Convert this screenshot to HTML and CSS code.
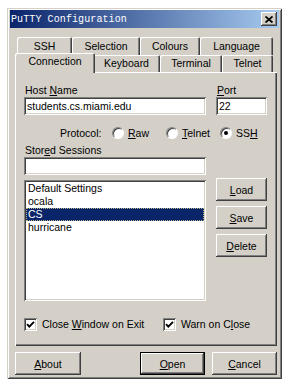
FILE: index.html
```html
<!DOCTYPE html>
<html>
<head>
    <title>PuTTY Configuration</title>
    <link rel="stylesheet" href="styles.css">
</head>
<body>
    <div class="window">
        <div class="titlebar">
            <span class="title">PuTTY Configuration</span>
            <span class="close-btn">
                <svg width="8" height="7" viewBox="0 0 8 7"><path d="M0.5 0.5 L7.5 6.5 M7.5 0.5 L0.5 6.5" stroke="#000" stroke-width="1.8" fill="none"/></svg>
            </span>
        </div>
        <div class="client">
            <div class="tabs">
                <div class="tab-row back">
                    <div class="tab tab-ssh">SSH</div>
                    <div class="tab tab-selection">Selection</div>
                    <div class="tab tab-colours">Colours</div>
                    <div class="tab tab-language">Language</div>
                </div>
                <div class="tab-row front">
                    <div class="tab tab-connection active">Connection</div>
                    <div class="tab tab-keyboard">Keyboard</div>
                    <div class="tab tab-terminal">Terminal</div>
                    <div class="tab tab-telnet">Telnet</div>
                </div>
            </div>

            <div class="panel">
                <div class="host-row">
                    <div class="host-col">
                        <div class="label">Host <u>N</u>ame</div>
                        <div class="field">students.cs.miami.edu</div>
                    </div>
                    <div class="port-col">
                        <div class="label"><u>P</u>ort</div>
                        <div class="field">22</div>
                    </div>
                </div>

                <div class="protocol-row">
                    <span class="protocol-label">Protocol:</span>
                    <span class="radio-opt"><span class="radio"></span><span><u>R</u>aw</span></span>
                    <span class="radio-opt"><span class="radio"></span><span><u>T</u>elnet</span></span>
                    <span class="radio-opt"><span class="radio checked"></span><span>SS<u>H</u></span></span>
                </div>

                <div class="label stored-label">Stor<u>e</u>d Sessions</div>
                <div class="field stored"></div>

                <div class="sessions-row">
                    <ul class="listbox">
                        <li>Default Settings</li>
                        <li>ocala</li>
                        <li class="selected">CS</li>
                        <li>hurricane</li>
                    </ul>
                    <div class="side-buttons">
                        <button class="btn"><u>L</u>oad</button>
                        <button class="btn"><u>S</u>ave</button>
                        <button class="btn"><u>D</u>elete</button>
                    </div>
                </div>

                <div class="check-row">
                    <span class="check-opt first">
                        <span class="checkbox"><svg width="9" height="9" viewBox="0 0 9 9"><path d="M1 4.2 L3.3 6.6 L8 1.8" stroke="#000" stroke-width="1.9" fill="none"/></svg></span>
                        <span>Close <u>W</u>indow on Exit</span>
                    </span>
                    <span class="check-opt">
                        <span class="checkbox"><svg width="9" height="9" viewBox="0 0 9 9"><path d="M1 4.2 L3.3 6.6 L8 1.8" stroke="#000" stroke-width="1.9" fill="none"/></svg></span>
                        <span>Warn on C<u>l</u>ose</span>
                    </span>
                </div>
            </div>

            <div class="bottom-buttons">
                <button class="btn btn-about"><u>A</u>bout</button>
                <div class="right-buttons">
                    <button class="btn btn-default"><u>O</u>pen</button>
                    <button class="btn btn-cancel"><u>C</u>ancel</button>
                </div>
            </div>
        </div>
    </div>
</body>
</html>
```

FILE: styles.css
```css
body {
    margin: 0;
    background: #fff;
    font-family: "Liberation Sans", Arial, sans-serif;
    font-size: 10.5px;
    color: #000;
}
u {
    text-decoration-thickness: 1px;
    text-underline-offset: 1px;
}
.window {
    box-sizing: border-box;
    width: 275px;
    margin: 8px 0 0 7px;
    padding: 2px 3px 4px 3px;
    background: #d4d0c8;
    box-shadow: inset 1px 1px #d4d0c8, inset -1px -1px #404040,
                inset 2px 2px #fff, inset -2px -2px #808080;
}
.titlebar {
    height: 18px;
    display: flex;
    align-items: center;
    justify-content: space-between;
    background: linear-gradient(to right, #0a246a, #a6caf0);
    padding-left: 1px;
}
.title {
    font-family: "Liberation Mono", "DejaVu Sans Mono", monospace;
    font-size: 10px;
    color: #fff;
    letter-spacing: 0.1px;
}
.close-btn {
    width: 16px;
    height: 14px;
    margin-right: 2px;
    display: flex;
    align-items: center;
    justify-content: center;
    background: #d4d0c8;
    box-shadow: inset -1px -1px #404040, inset 1px 1px #fff,
                inset -2px -2px #808080, inset 2px 2px #d4d0c8;
}
.client {
    padding: 0 2px 0 5px;
}

/* tabs */
.tabs {
    margin-top: 9px;
    padding-left: 2px;
}
.tab-row {
    display: flex;
    align-items: flex-start;
}
.tab-row.back {
    height: 18px;
}
.tab-row.front {
    height: 17px;
}
.tab {
    box-sizing: border-box;
    text-align: center;
    line-height: 14px;
    border-radius: 2px 2px 0 0;
    background: #d4d0c8;
    box-shadow: inset 1px 1px #fff, inset -1px 0 #404040, inset -2px 0 #808080;
}
.back .tab {
    height: 18px;
    padding-top: 2px;
}
.front .tab {
    height: 17px;
    padding-top: 1px;
}
.tab-ssh { width: 55px; }
.tab-selection { width: 68px; }
.tab-colours { width: 60px; }
.tab-language { width: 73px; }
.tab-connection { width: 76px; }
.tab-keyboard { width: 67px; }
.tab-terminal { width: 62px; }
.tab-telnet { width: 51px; }
.front .tab.active {
    position: relative;
    z-index: 1;
    width: 80px;
    height: 20px;
    margin: -2px -2px 0 -2px;
    padding-top: 1px;
}

/* panel */
.panel {
    box-sizing: border-box;
    height: 274px;
    padding: 12px 0 0 9px;
    box-shadow: inset 1px 1px #fff, inset -1px -1px #404040, inset -2px -2px #808080;
}
.label {
    height: 13px;
    line-height: 13px;
    padding-left: 1px;
}
.field {
    box-sizing: border-box;
    height: 18px;
    line-height: 18px;
    padding: 0 3px;
    background: #fff;
    white-space: nowrap;
    box-shadow: inset 1px 1px #808080, inset -1px -1px #fff,
                inset 2px 2px #404040, inset -2px -2px #d4d0c8;
}
.host-row {
    display: flex;
    gap: 10px;
}
.host-col {
    width: 182px;
}
.port-col {
    width: 51px;
}
.protocol-row {
    display: flex;
    align-items: center;
    height: 13px;
    margin-top: 11px;
    padding-left: 36px;
}
.protocol-label {
    width: 52px;
}
.radio-opt {
    display: flex;
    align-items: center;
    gap: 4px;
    width: 54px;
}
.radio {
    box-sizing: border-box;
    width: 12px;
    height: 12px;
    border-radius: 50%;
    background: #fff;
    border: 1px solid;
    border-color: #808080 #fff #fff #808080;
    box-shadow: inset 1px 1px #404040;
    display: flex;
    align-items: center;
    justify-content: center;
}
.radio.checked::after {
    content: "";
    width: 4px;
    height: 4px;
    border-radius: 50%;
    background: #000;
}
.stored-label {
    margin-top: 5px;
}
.stored {
    width: 182px;
}
.sessions-row {
    display: flex;
    align-items: flex-start;
    gap: 10px;
    margin-top: 3px;
}
.listbox {
    box-sizing: border-box;
    width: 182px;
    height: 121px;
    margin: 2px 0 0 0;
    padding: 2px;
    list-style: none;
    background: #fff;
    box-shadow: inset 1px 1px #808080, inset -1px -1px #fff,
                inset 2px 2px #404040, inset -2px -2px #d4d0c8;
}
.listbox li {
    height: 13px;
    line-height: 13px;
    padding-left: 2px;
    white-space: nowrap;
}
.listbox li.selected {
    background: #0a246a;
    color: #fff;
    outline: 1px dotted #b8b48a;
    outline-offset: -1px;
}
.side-buttons {
    display: flex;
    flex-direction: column;
    gap: 5px;
}
.btn {
    box-sizing: border-box;
    width: 51px;
    height: 23px;
    padding: 0;
    border: none;
    background: #d4d0c8;
    font-family: inherit;
    font-size: inherit;
    color: #000;
    box-shadow: inset -1px -1px #404040, inset 1px 1px #fff,
                inset -2px -2px #808080, inset 2px 2px #d4d0c8;
}
.check-row {
    display: flex;
    align-items: center;
    height: 14px;
    margin-top: 16px;
}
.check-opt {
    display: flex;
    align-items: center;
    gap: 5px;
}
.check-opt.first {
    width: 139px;
}
.checkbox {
    box-sizing: border-box;
    width: 13px;
    height: 13px;
    background: #fff;
    display: flex;
    align-items: center;
    justify-content: center;
    box-shadow: inset 1px 1px #808080, inset -1px -1px #fff,
                inset 2px 2px #404040, inset -2px -2px #d4d0c8;
}

/* bottom */
.bottom-buttons {
    display: flex;
    justify-content: space-between;
    margin-top: 6px;
}
.btn-about {
    width: 66px;
}
.right-buttons {
    display: flex;
    gap: 7px;
}
.btn-default,
.btn-cancel {
    width: 65px;
}
.btn-default {
    box-shadow: inset 1px 1px #000, inset -1px -1px #000,
                inset -2px -2px #404040, inset 2px 2px #fff,
                inset -3px -3px #808080;
}
```
